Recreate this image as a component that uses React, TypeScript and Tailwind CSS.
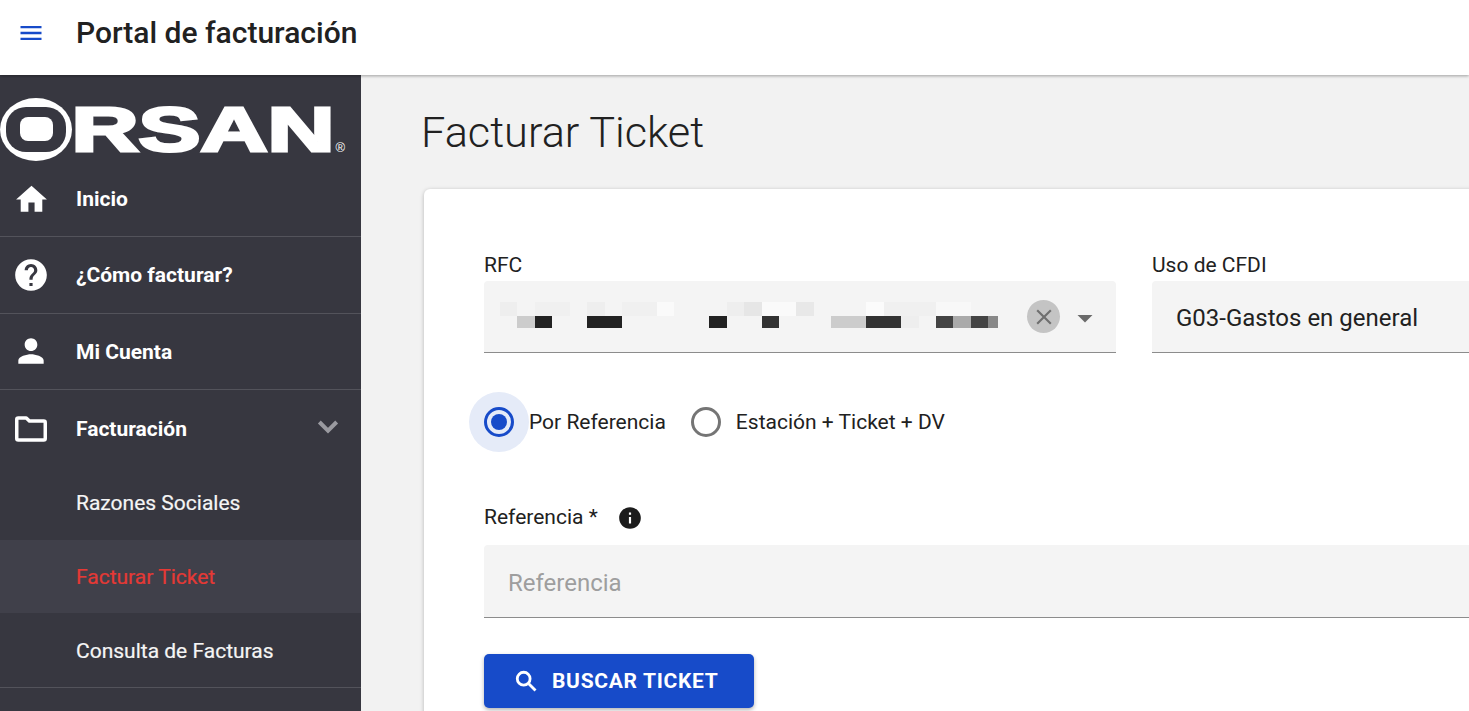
import { MdHome, MdHelp, MdPerson, MdMenu, MdInfo, MdClose, MdArrowDropDown } from "react-icons/md";

const topRow = [
  { col: 0, span: 1, bg: "bg-[#eeeeee]" },
  { col: 2, span: 2, bg: "bg-[#f0f0f0]" },
  { col: 5, span: 1, bg: "bg-[#eeeeee]" },
  { col: 7, span: 2, bg: "bg-[#f0f0f0]" },
  { col: 9, span: 1, bg: "bg-[#fafafa]" },
  { col: 13, span: 1, bg: "bg-[#eeeeee]" },
  { col: 14, span: 1, bg: "bg-[#e6e6e6]" },
  { col: 15, span: 2, bg: "bg-[#fafafa]" },
  { col: 17, span: 1, bg: "bg-[#e8e8e8]" },
  { col: 21, span: 1, bg: "bg-[#fbfbfb]" },
  { col: 22, span: 3, bg: "bg-[#f0f0f0]" },
  { col: 25, span: 2, bg: "bg-[#f8f8f8]" },
];

const bottomRow = [
  { col: 1, span: 1, bg: "bg-[#cccccc]" },
  { col: 2, span: 1, bg: "bg-[#222222]" },
  { col: 5, span: 2, bg: "bg-[#222222]" },
  { col: 12, span: 1, bg: "bg-[#222222]" },
  { col: 15, span: 1, bg: "bg-[#333333]" },
  { col: 19, span: 2, bg: "bg-[#cccccc]" },
  { col: 21, span: 2, bg: "bg-[#333333]" },
  { col: 23, span: 1, bg: "bg-[#eeeeee]" },
  { col: 25, span: 1, bg: "bg-[#444444]" },
  { col: 26, span: 1, bg: "bg-[#aaaaaa]" },
  { col: 27, span: 1, bg: "bg-[#444444]" },
  { col: 28, span: 1, bg: "bg-[#888888] w-[10px]" },
];

function MosaicRow({ cells, className }: { cells: { col: number; span: number; bg: string }[]; className: string }) {
  return (
    <div className={`grid grid-cols-[repeat(29,17.45px)] ${className}`}>
      {cells.map((c) => (
        <div key={c.col} className={c.bg} style={{ gridColumn: `${c.col + 1} / span ${c.span}` }} />
      ))}
    </div>
  );
}

function Logo() {
  return (
    <svg width="361" height="88" viewBox="0 0 361 88" className="block">
      <ellipse cx="36" cy="54.5" rx="36" ry="31.5" fill="#fff" />
      <rect x="6" y="32" width="60" height="45" rx="20" fill="#373740" />
      <rect x="20" y="42" width="33" height="24" rx="8" fill="#fff" />
      <text
        x="71.5"
        y="76"
        textLength="263"
        lengthAdjust="spacingAndGlyphs"
        fill="#fff"
        stroke="#fff"
        strokeWidth="3"
        fontFamily="'Liberation Sans', sans-serif"
        fontWeight="700"
        fontSize="63"
      >
        RSAN
      </text>
      <text x="335.5" y="77" fill="#fff" fontFamily="'Liberation Sans', sans-serif" fontSize="13">
        ®
      </text>
    </svg>
  );
}

function NavItem({ icon, label }: { icon: React.ReactNode; label: string }) {
  return (
    <div className="flex h-[76.5px] items-center border-b border-[#53535b] pl-[12px]">
      <span className="flex w-[38px] justify-center text-white">{icon}</span>
      <span className="ml-[26px] pt-[2px] text-[21px] font-bold text-white">{label}</span>
    </div>
  );
}

export default function App() {
  return (
    <div className="flex h-screen flex-col overflow-hidden bg-[#f2f2f2] font-['Roboto',sans-serif]">
      <header className="relative z-10 flex h-[75px] shrink-0 items-center bg-white pb-[10px] pl-[17px] shadow-[0_1px_3px_rgba(0,0,0,0.35)]">
        <MdMenu size={28} className="text-[#174bc9]" />
        <h1 className="ml-[31px] text-[30px] font-medium text-[#212121]">Portal de facturación</h1>
      </header>

      <div className="flex min-h-0 flex-1">
        <aside className="w-[361px] shrink-0 bg-[#373740]">
          <Logo />
          <div className="-mt-[1px] flex h-[75px] items-center border-b border-[#53535b] pl-[12px]">
            <span className="flex w-[38px] justify-center text-white">
              <MdHome size={37} />
            </span>
            <span className="ml-[26px] pt-[2px] text-[21px] font-bold text-white">Inicio</span>
          </div>
          <NavItem icon={<MdHelp size={38} />} label="¿Cómo facturar?" />
          <NavItem icon={<MdPerson size={38} />} label="Mi Cuenta" />
          <div className="flex h-[77px] items-center pl-[12px]">
            <span className="flex w-[38px] justify-center pt-[1px] text-white">
              <svg width="38" height="38" viewBox="0 0 24 24" fill="none" stroke="currentColor" strokeWidth="2.2" strokeLinejoin="round">
                <path d="M3 6a1 1 0 0 1 1-1h5l2 2h9a1 1 0 0 1 1 1v10a1 1 0 0 1-1 1H4a1 1 0 0 1-1-1z" />
              </svg>
            </span>
            <span className="ml-[26px] pt-[2px] text-[21px] font-bold text-white">Facturación</span>
            <svg width="32" height="32" viewBox="0 0 24 24" fill="none" stroke="#9a9aa0" strokeWidth="3" className="ml-auto mr-[17px] -mt-[6px]">
              <path d="M5.5 9l6.5 6.5L18.5 9" />
            </svg>
          </div>
          <div className="flex h-[73px] items-center pl-[76px] pt-[1px] text-[21px] text-[#f5f5f5] [-webkit-text-stroke:0.2px_#f5f5f5]">Razones Sociales</div>
          <div className="flex h-[73px] items-center bg-[#40404a] pl-[76px] pt-[3px] text-[21px] text-[#e53935] [-webkit-text-stroke:0.2px_#e53935]">Facturar Ticket</div>
          <div className="flex h-[75px] items-center border-b border-[#53535b] pl-[76px] pt-[4px] text-[21px] text-[#f5f5f5] [-webkit-text-stroke:0.2px_#f5f5f5]">Consulta de Facturas</div>
        </aside>

        <main className="min-w-0 flex-1 overflow-hidden pl-[61px]">
          <h2 className="-ml-[1px] mt-[28px] text-[43.3px] font-light leading-[60px] text-[#212121]">Facturar Ticket</h2>
          <div className="ml-[2px] mt-[26px] w-[1300px] rounded-[6px] bg-white pb-[40px] pl-[60px] pt-[62px] shadow-[0_1px_4px_rgba(0,0,0,0.25)]">
            <div className="flex gap-[36px]">
              <div className="w-[632px]">
                <label className="block text-[21px] leading-[28px] text-[#212121]">RFC</label>
                <div className="relative mt-[2px] h-[72px] rounded-t-[4px] border-b border-[#8c8c8c] bg-[#f4f4f4]">
                  <div className="absolute left-[16px] top-[21px]">
                    <MosaicRow cells={topRow} className="h-[14px]" />
                    <MosaicRow cells={bottomRow} className="h-[12px]" />
                  </div>
                  <span className="absolute left-[543px] top-[19px] flex h-[33px] w-[33px] items-center justify-center rounded-full bg-[#c4c4c4] text-[#6f6f6f]">
                    <MdClose size={26} />
                  </span>
                  <MdArrowDropDown size={36} className="absolute left-[583px] top-[19px] text-[#6a6a6a]" />
                </div>
              </div>
              <div className="w-[480px]">
                <label className="block text-[21px] leading-[28px] text-[#212121]">Uso de CFDI</label>
                <div className="mt-[2px] flex h-[72px] items-center rounded-t-[4px] border-b border-[#8c8c8c] bg-[#f4f4f4] pl-[24px] pt-[2px] text-[24px] text-[#212121]">
                  G03-Gastos en general
                </div>
              </div>
            </div>

            <div className="relative mt-[39px] flex h-[60px] items-center text-[21px] text-[#212121]">
              <span className="-ml-[15px] flex h-[60px] w-[60px] shrink-0 items-center justify-center rounded-full bg-[#e5ebf8]">
                <span className="flex h-[30px] w-[30px] items-center justify-center rounded-full border-[3px] border-[#174bc9]">
                  <span className="h-[16px] w-[16px] rounded-full bg-[#174bc9]" />
                </span>
              </span>
              <span className="pt-[1px]">Por Referencia</span>
              <span className="ml-[25px] h-[30px] w-[30px] shrink-0 rounded-full border-[3px] border-[#757575]" />
              <span className="ml-[15px] pt-[1px]">Estación + Ticket + DV</span>
            </div>

            <div className="mt-[50px] flex h-[28px] items-center text-[21px] text-[#212121]">
              <span className="pt-[4px]">Referencia *</span>
              <MdInfo size={26} className="ml-[19px] mt-[3px] text-[#1c1c1c]" />
            </div>
            <div className="mt-[15px] flex h-[73px] items-center rounded-t-[4px] border-b border-[#8c8c8c] bg-[#f4f4f4] pl-[24px] pt-[4px] text-[24px] text-[#9e9e9e]">
              Referencia
            </div>

            <button className="mt-[36px] flex h-[54px] w-[270px] items-center rounded-[5px] bg-[#174bc9] pl-[29px] text-[21px] font-bold tracking-[0.7px] text-white shadow-[0_2px_4px_rgba(0,0,0,0.3)]">
              <svg width="27" height="27" viewBox="0 0 24 24" fill="none" stroke="currentColor" strokeWidth="2.5" className="mr-[12px]">
                <circle cx="9.5" cy="9.5" r="5.7" />
                <path d="M14 14l6 6" />
              </svg>
              <span className="pt-[2px]">BUSCAR TICKET</span>
            </button>
          </div>
        </main>
      </div>
    </div>
  );
}
